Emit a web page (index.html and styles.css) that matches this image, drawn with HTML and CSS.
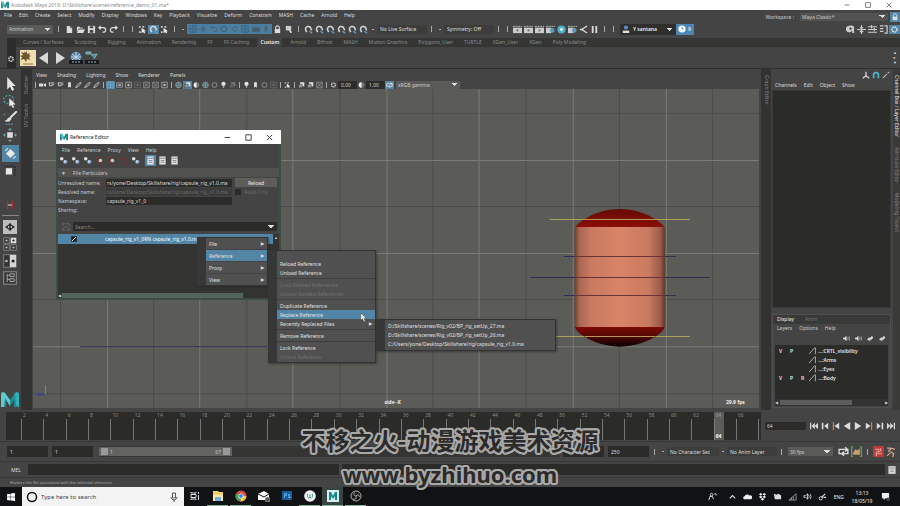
FILE: index.html
```html
<!DOCTYPE html>
<html lang="en">
<head>
<meta charset="utf-8">
<title>Autodesk Maya 2019: D:\Skillshare\scenes\reference_demo_01.ma*</title>
<link rel="stylesheet" href="styles.css">
</head>
<body>
<svg class="defs" aria-hidden="true">
  <defs>
    <linearGradient id="body" x1="0" x2="1" y1="0" y2="0"><stop offset="0" stop-color="#6f3f30"/><stop offset=".05" stop-color="#a86650"/><stop offset=".18" stop-color="#c97a60"/><stop offset=".5" stop-color="#d98468"/><stop offset=".82" stop-color="#c97a60"/><stop offset=".95" stop-color="#9a5c48"/><stop offset="1" stop-color="#5f3528"/></linearGradient>
    <linearGradient id="top" x1="0" x2="0" y1="0" y2="1"><stop offset="0" stop-color="#650a05"/><stop offset="1" stop-color="#8d0f08"/></linearGradient>
    <linearGradient id="low" x1="0" x2="0" y1="0" y2="1"><stop offset="0" stop-color="#7c0c06"/><stop offset=".4" stop-color="#5a0804"/><stop offset="1" stop-color="#0c0100"/></linearGradient>
  </defs>
  <symbol id="maya" viewBox="0 0 10 10"><path d="M0 1h3l2 4 2-4h3v8H7.600V5L6 8H4L2.400 5v4H0z" fill="#1d8a8c"/><path d="M0 1h3l2 4-1 3-4-7z" fill="#5cc7c4"/></symbol>
  <symbol id="new" viewBox="0 0 10 10"><path d="M2 1h4l2 2v6H2z" fill="#ddd"/><path d="M6 1v2h2" fill="none" stroke="#555"/></symbol>
  <symbol id="open" viewBox="0 0 10 10"><path d="M1 2h3l1 1h3v1H3L1 8zM3 5h7L8 9H1z" fill="#ddd"/></symbol>
  <symbol id="save" viewBox="0 0 10 10"><path d="M1 1h8v8H1z" fill="#ddd"/><path d="M3 1.500h4v2H3zM3 5.500h4v3H3z" fill="#444"/></symbol>
  <symbol id="undo" viewBox="0 0 10 10"><path d="M1 3h5a2.500 2.500 0 0 1 0 5H5M3 1 1 3l2 2" fill="none" stroke="#ddd" stroke-width="1.300"/></symbol>
  <symbol id="redo" viewBox="0 0 10 10"><path d="M9 3H4a2.500 2.500 0 0 0 0 5h1M7 1l2 2-2 2" fill="none" stroke="#ddd" stroke-width="1.300"/></symbol>
  <symbol id="pick" viewBox="0 0 10 10"><path d="M1 1h2v2H1zM1 7h2v2H1zM5 1h2v2H5z" fill="#ccc"/><path d="M4 3l5 4H7l1 2-1 .5L6 8 4 9z" fill="#eee"/></symbol>
  <symbol id="dots" viewBox="0 0 10 10"><path d="M0 6l4-3v6zM4 5l3-4 2 3-4 4z" fill="#ddd"/></symbol>
  <symbol id="arrow" viewBox="0 0 10 10"><path d="M3 0v9l2-2 1.500 3L8 9 6.500 6.500H9z" fill="#e4e4e4"/></symbol>
  <symbol id="lasso" viewBox="0 0 10 10"><ellipse cx="4" cy="4" rx="3.500" ry="3" fill="none" stroke="#4f9aa6" stroke-width=".9" stroke-dasharray="1.500 1"/><path d="M4.500 3v6l1.500-1.200L7 10l1-.5-.9-2H9z" fill="#eee"/></symbol>
  <symbol id="brush" viewBox="0 0 10 10"><path d="M10 0 5 5" stroke="#ddd" stroke-width="1.400"/><path d="M5.500 4.500C3 4.500 3 7 1 7c2 1.500 4.500.5 5-1.500z" fill="#ddd"/><path d="M2 9.500h6M1 2v2" stroke="#4f9aa6" stroke-dasharray="1 1"/></symbol>
  <symbol id="move" viewBox="0 0 10 10"><path d="M3 3h4v4H3z" fill="#ddd"/><path d="M5 0l1.500 1.600h-3zM5 10l1.500-1.600h-3zM0 5l1.600-1.500v3zM10 5 8.400 3.500v3z" fill="#6daab5"/></symbol>
  <symbol id="rotate" viewBox="0 0 10 10"><path d="M5 1.500 8.500 5 5 8.500 1.500 5z" fill="#e8e8e8"/><path d="M1 3 3 1M9 7 7 9" stroke="#b8dbe8" fill="none"/></symbol>
  <symbol id="scale" viewBox="0 0 10 10"><path d="M2 3h4.500v4.500H2z" fill="#e6e6e6"/><path d="M1 1.500h7.500v7" fill="none" stroke="#222" stroke-dasharray="1 1"/></symbol>
  <symbol id="snaps" viewBox="0 0 10 10"><path d="M2.500 1v8M7.500 1v8" stroke="#a33" stroke-width="1.300"/><path d="M3 5h4" stroke="#ddd"/></symbol>
  <symbol id="lay1" viewBox="0 0 10 10"><path d="M0 0h10v10H0z" fill="#bdbdbd"/><path d="M5 2l1.500 2L5 5 3.500 4zM5 8l1.500-2L5 5 3.500 6zM1.500 5l2-1.500v3zM8.500 5l-2-1.500v3z" fill="#222"/></symbol>
  <symbol id="lay4" viewBox="0 0 10 10"><path d="M.5.5h4v4h-4zM.5 5.500h4v4h-4zM5.500 5.500h4v4h-4z" fill="#333" stroke="#8a8a8a" stroke-width=".6"/><path d="M5.500.500h4v4h-4z" fill="#ddd"/><circle cx="2.500" cy="2.500" r=".8" fill="#bbb"/><circle cx="7.500" cy="2.500" r=".8" fill="#222"/><circle cx="2.500" cy="7.500" r=".8" fill="#bbb"/><circle cx="7.500" cy="7.500" r=".8" fill="#bbb"/></symbol>
  <symbol id="lay2" viewBox="0 0 10 10"><path d="M.5.5h4.500v9H.5z" fill="#333" stroke="#8a8a8a" stroke-width=".6"/><path d="M5 .5h4.500v9H5z" fill="#d6d6d6"/><circle cx="2.500" cy="5" r=".9" fill="#bbb"/><circle cx="7.200" cy="5" r="1.100" fill="#222"/></symbol>
  <symbol id="lay3" viewBox="0 0 10 10"><path d="M.5.5h9v9h-9z" fill="#333" stroke="#8a8a8a" stroke-width=".8"/><path d="M3 2v6M3 3h2M3 6h2" stroke="#aaa" stroke-width=".7"/><path d="M5 2h3v2H5zM5 5.500h3v2H5z" fill="none" stroke="#aaa" stroke-width=".7"/></symbol>
  <symbol id="magnet" viewBox="0 0 10 10"><path d="M3 8 1.800 5.500a3 3 0 1 1 5.800-1.800L8.500 6" fill="none" stroke="#d5d5d5" stroke-width="1.700"/><path d="M6 7l3 2" stroke="#6a9dc4" stroke-width="1.500"/></symbol>
  <symbol id="lock" viewBox="0 0 10 10"><path d="M2 4.500h6V9H2z" fill="#ddd"/><path d="M3 5V3a2 2 0 0 1 4 0v2" fill="none" stroke="#ddd" stroke-width="1.200"/></symbol>
  <symbol id="flag" viewBox="0 0 10 10"><path d="M2 1h6v5H2z" fill="#ccc"/><path d="M5 4l4 4-2 1z" fill="#fff"/></symbol>
  <symbol id="clap" viewBox="0 0 10 10"><path d="M0 3h10v6H0z" fill="#ccc"/><path d="M0 1.500h10" stroke="#ccc" stroke-dasharray="2 1"/><path d="M4 5h2v2H4z" fill="#666"/></symbol>
  <symbol id="clapb" viewBox="0 0 10 10"><path d="M0 3h6v6H0z" fill="#ccc"/><path d="M0 1.500h10" stroke="#ccc" stroke-dasharray="2 1"/><circle cx="7" cy="6" r="2.600" fill="#5b9ab8"/></symbol>
  <symbol id="ball" viewBox="0 0 10 10"><circle cx="5" cy="5" r="4.500" fill="#52b1c4"/><circle cx="5" cy="5" r="1.600" fill="#e8f7fa"/></symbol>
  <symbol id="cut" viewBox="0 0 10 10"><path d="M9 1 3 5l6 4M1 5h4" fill="none" stroke="#ddd" stroke-width="1.400"/></symbol>
  <symbol id="pause" viewBox="0 0 10 10"><path d="M2 1h2v8H2zM6 1h2v8H6z" fill="#ddd"/></symbol>
  <symbol id="cam" viewBox="0 0 10 10"><path d="M0 3h6v4H0zM7 4l3-2v6L7 6z" fill="#ddd"/></symbol>
  <symbol id="cams" viewBox="0 0 10 10"><path d="M1 2h8M2 2v4h4V3M7 5l2-1" fill="none" stroke="#ccc" stroke-width="1.300"/></symbol>
  <symbol id="mark" viewBox="0 0 10 10"><path d="M3 1h4v8L5 7.500 3 9z" fill="#ddd"/></symbol>
  <symbol id="pen" viewBox="0 0 10 10"><path d="M1 9l2-4 5-4 1 1-4 5z" fill="none" stroke="#ccc" stroke-width="1.200"/></symbol>
  <symbol id="grid" viewBox="0 0 10 10"><path d="M1 1h8v8H1zM1 5h8M5 1v8" fill="none" stroke="#7fb0cf" stroke-width="1"/></symbol>
  <symbol id="film" viewBox="0 0 10 10"><path d="M.5 2h9v6h-9z" fill="none" stroke="#bbb"/><path d="M2.500 4h5v2h-5z" fill="#bbb"/></symbol>
  <symbol id="gate" viewBox="0 0 10 10"><path d="M1 1h8v8H1z" fill="none" stroke="#bbb"/><circle cx="5" cy="5" r="1.700" fill="#bbb"/></symbol>
  <symbol id="gate2" viewBox="0 0 10 10"><path d="M1 1h8v8H1zM2 2l6 6M8 2 2 8" fill="none" stroke="#aaa" stroke-width=".9"/></symbol>
  <symbol id="ring" viewBox="0 0 10 10"><circle cx="5" cy="5" r="3.500" fill="none" stroke="#999" stroke-width="1.200"/></symbol>
  <symbol id="half" viewBox="0 0 10 10"><circle cx="5" cy="5" r="4" fill="#777"/><path d="M5 1a4 4 0 0 0 0 8z" fill="#eee"/></symbol>
  <symbol id="globe" viewBox="0 0 10 10"><circle cx="5" cy="5" r="4" fill="#4d6a72" stroke="#9aabb0"/><path d="M1 5h8M5 1v8" stroke="#9aabb0" stroke-width=".7"/></symbol>
  <symbol id="bulb" viewBox="0 0 10 10"><circle cx="5" cy="3.500" r="3" fill="#e4e4e4"/><path d="M4 6h2v3H4z" fill="#aaa"/></symbol>
  <symbol id="cube" viewBox="0 0 10 10"><path d="M3 1h6v6H3z" fill="#ddd"/><path d="M1 4h5v5H1z" fill="#999" stroke="#333" stroke-width=".7"/></symbol>
  <symbol id="tool" viewBox="0 0 10 10"><path d="M0 3c2-3 7-3 9-1v7H7V6L5 8H2L0 6z" fill="#ccc"/><circle cx="5" cy="4" r="1.300" fill="#444"/></symbol>
  <symbol id="figure" viewBox="0 0 10 10"><path d="M5 0v10M0 5h10M3 3h4M3 8l2-2 2 2" stroke="#ccc" stroke-width="1.200" fill="none"/></symbol>
  <symbol id="lines" viewBox="0 0 10 10"><path d="M0 2h10M0 5h10M0 8h10M4 0v4M7 3v4" stroke="#ccc" stroke-width="1.200"/></symbol>
  <symbol id="panel" viewBox="0 0 10 10"><path d="M1 1h4M1 4h4M1 7h4M6 1h3v8H6" stroke="#ccc" stroke-width="1.400" fill="none"/></symbol>
  <symbol id="gear" viewBox="0 0 10 10"><circle cx="5" cy="5" r="2.800" fill="none" stroke="#ddd" stroke-width="1.600" stroke-dasharray="2 .6"/></symbol>
  <symbol id="axis" viewBox="0 0 10 10"><path d="M5 1v5L1 9M5 6l4 3" stroke="#ddd" stroke-width="1.500" fill="none"/></symbol>
  <symbol id="arch" viewBox="0 0 10 10"><path d="M2 9V5a3 3 0 0 1 6 0v4" stroke="#46b3c4" stroke-width="2.200" fill="none"/></symbol>
  <symbol id="slash" viewBox="0 0 10 10"><path d="M1 9 6 4M7 3l2-2" stroke="#bbb" stroke-width="1.300"/></symbol>
  <symbol id="curve" viewBox="0 0 10 10"><path d="M0 9 7 1h1v8" fill="none" stroke="#c8c8bc" stroke-width="1"/></symbol>
  <symbol id="horn" viewBox="0 0 10 10"><path d="M0 4h2l3-3v8L2 6H0z" fill="#ddd"/><path d="M7 3v4M9 2v6" stroke="#ddd" stroke-width=".8"/></symbol>
  <symbol id="sheet" viewBox="0 0 10 10"><path d="M1.500.5h7v9h-7z" fill="#e2e2e2"/><path d="M1.500 2.500h7M3 5h4M3 7h4" stroke="#777" stroke-width=".9"/></symbol>
  <symbol id="refdot" viewBox="0 0 10 10"><circle cx="3" cy="3" r="2" fill="#ddd"/><circle cx="7" cy="6.500" r="2.400" fill="#7f9fc0"/><circle cx="6.500" cy="6" r="1" fill="#eef"/></symbol>
  <symbol id="refred" viewBox="0 0 10 10"><path d="M1 3 3 1M2 8l6-6M8 8l1 1" stroke="#a02828" stroke-width="1.200"/><circle cx="6" cy="5" r="2" fill="#ccc"/></symbol>
  <symbol id="refoff" viewBox="0 0 10 10"><path d="M2 1l3 4M6 6l3 3" stroke="#8c2020" stroke-width="1.200"/><circle cx="6" cy="4" r="1.500" fill="#6a3a3a"/></symbol>
  <symbol id="min" viewBox="0 0 10 10"><path d="M2 5h6" stroke="currentColor"/></symbol>
  <symbol id="max" viewBox="0 0 10 10"><path d="M2 2h6v6H2z" stroke="currentColor" fill="none"/></symbol>
  <symbol id="close" viewBox="0 0 10 10"><path d="M2 2l6 6M8 2 2 8" stroke="currentColor"/></symbol>
  <symbol id="loop" viewBox="0 0 10 10"><path d="M3 7H1V3h7M6.500 1l2 2-2 2M7 3h2v4H4M5.500 5l-2 2 2 2" fill="none" stroke="#ddd" stroke-width="1.200"/></symbol>
  <symbol id="key" viewBox="0 0 10 10"><path d="M2 0H.6v10H2M8 0h1.400v10H8" fill="none" stroke="#69a052" stroke-width="1.200"/><path d="M2 6l2-3 2 1 2-2v6H2z" fill="#c9a070"/></symbol>
  <symbol id="auto" viewBox="0 0 10 10"><path d="M2 3h4M7 2v3M8 7H4M3 5v4" stroke="#f0a8a0" stroke-width="1"/><circle cx="5" cy="5" r="1" fill="#f0c0b8"/></symbol>
  <symbol id="run" viewBox="0 0 10 10"><path d="M1 2h4M2 5l3-3 3 1M4 5l3 2-1 3M4 6 1 9" stroke="#d8a090" stroke-width="1.200" fill="none"/></symbol>
</svg>

<header class="titlebar">
  <svg class="i8"><use href="#maya"/></svg>
  <span class="title">Autodesk Maya 2019: D:\Skillshare\scenes\reference_demo_01.ma*</span>
  <div class="winbtns"><button aria-label="Minimize"><svg class="i8"><use href="#min"/></svg></button><button aria-label="Restore"><svg class="i8"><use href="#max"/></svg></button><button aria-label="Close"><svg class="i8"><use href="#close"/></svg></button></div>
</header>

<div class="top">
  <nav class="menubar"><a href="#">File</a><a href="#">Edit</a><a href="#">Create</a><a href="#">Select</a><a href="#">Modify</a><a href="#">Display</a><a href="#">Windows</a><a href="#">Key</a><a href="#">Playback</a><a href="#">Visualize</a><a href="#">Deform</a><a href="#">Constrain</a><a href="#">MASH</a><a href="#">Cache</a><a href="#">Arnold</a><a href="#">Help</a></nav>
  <div class="workspace"><label for="ws">Workspace :</label><select id="ws" class="combo"><option>Maya Classic*</option></select><button class="hl lockbtn" aria-label="Lock workspace"><svg class="i8"><use href="#lock"/></svg></button></div>
</div>

<div class="status">
  <select class="combo mode" aria-label="Menu set"><option>Animation</option></select>
  <i class="sep wide"></i>
  <div class="set11"><svg><use href="#new"/></svg><svg><use href="#open"/></svg><svg><use href="#save"/></svg><svg><use href="#undo"/></svg><svg><use href="#redo"/></svg></div>
  <i class="sep"></i><i class="sep"></i>
  <div class="set11"><svg><use href="#pick"/></svg><svg class="hl"><use href="#magnet"/></svg><svg><use href="#pick"/></svg></div>
  <i class="sep"></i><i class="pt"></i>
  <div class="mask"><svg><use href="#grid"/></svg><svg><use href="#figure"/></svg><svg><use href="#undo"/></svg><svg><use href="#ring"/></svg><svg><use href="#gear"/></svg><svg><use href="#grid"/></svg><svg><use href="#clap"/></svg><svg><use href="#mark"/></svg></div>
  <div class="set11"><svg><use href="#lock"/></svg><svg><use href="#flag"/></svg></div>
  <i class="sep"></i>
  <div class="set11"><svg><use href="#magnet"/></svg><svg><use href="#magnet"/></svg><svg><use href="#magnet"/></svg><svg><use href="#magnet"/></svg><svg><use href="#magnet"/></svg><svg><use href="#magnet"/></svg></div>
  <i class="pt"></i><button class="flat">No Live Surface</button><i class="sep"></i><i class="pt"></i><button class="flat">Symmetry: Off</button><i class="sep"></i><i class="sep"></i>
  <div class="set11"><svg><use href="#clap"/></svg><svg><use href="#clap"/></svg><svg><use href="#clap"/></svg><svg><use href="#clapb"/></svg><svg><use href="#ball"/></svg><svg><use href="#clapb"/></svg><svg><use href="#cut"/></svg><svg><use href="#pause"/></svg></div>
  <i class="sep"></i><i class="sep"></i>
  <div class="user"><svg class="i8" viewBox="0 0 10 10"><circle cx="5" cy="3" r="2.500" fill="#5a8fd8"/><path d="M1 10V7h8v3z" fill="#ddd"/></svg><select class="combo" aria-label="Account"><option>Y santana</option></select><button class="days"><svg class="i8" viewBox="0 0 10 10"><circle cx="5" cy="5" r="4.500" fill="#fff"/><path d="M5 2v3h2" stroke="#4b86b4" fill="none"/></svg>9</button></div>
  <div class="set11 right"><svg><use href="#tool"/></svg><svg><use href="#figure"/></svg><svg><use href="#lines"/></svg><svg><use href="#panel"/></svg><svg class="hl"><use href="#gear"/></svg></div>
</div>

<nav class="tabs"><a href="#">Curves / Surfaces</a><a href="#">Sculpting</a><a href="#">Rigging</a><a href="#">Animation</a><a href="#">Rendering</a><a href="#">FX</a><a href="#">FX Caching</a><a href="#" class="on">Custom</a><a href="#">Arnold</a><a href="#">Bifrost</a><a href="#">MASH</a><a href="#">Motion Graphics</a><a href="#">Polygons_User</a><a href="#">TURTLE</a><a href="#">XGen_User</a><a href="#">XGen</a><a href="#">Poly Modeling</a></nav>
<div class="shelf">
  <div class="shelfside"><svg class="i8"><use href="#gear"/></svg></div>
  <svg class="i16" viewBox="0 0 16 16"><path d="M0 0h16v16H0z" fill="#f0dfae"/><path d="M4 1l1 2 2-2v3l3-1-1 2 2 1-2 1 1 3-3-1-1 3-2-3-3 1 1-3-2-1 3-1-2-3 3 1z" fill="#6d5634"/><path d="M3 14h10" stroke="#8d794c"/></svg>
  <svg class="i16" viewBox="0 0 16 16"><path d="M12 2v12L3 8z" fill="#d9d9d9"/></svg>
  <svg class="i16" viewBox="0 0 16 16"><path d="M4 2v12l9-6z" fill="#d9d9d9"/></svg>
  <svg class="i16" viewBox="0 0 16 16"><circle cx="8" cy="7" r="5.500" fill="#547f9e"/><path d="M8 2v9M3 7h10M4 4l8 6M12 4l-8 6" stroke="#c6dceb"/><path d="M1 10h14v4H1z" fill="#15191c"/><path d="M4 12h8" stroke="#9ab4c4" stroke-dasharray="2 1"/></svg>
  <svg class="i16" viewBox="0 0 16 16"><path d="M2 2h5v2H2zM7 5l6-1-3 5" fill="#4e8695" stroke="#9cc" stroke-width=".8"/><path d="M1 10h14v4H1z" fill="#15191c"/><path d="M4 12h8" stroke="#9ab4c4" stroke-dasharray="2 1"/></svg>
  <div class="updown"><span>▲</span><span>●</span><span>▼</span></div>
</div>

<main class="main">
  <aside class="toolbox">
    <svg><use href="#arrow"/></svg><svg><use href="#lasso"/></svg><svg><use href="#brush"/></svg><svg><use href="#move"/></svg><svg class="hl"><use href="#rotate"/></svg><svg><use href="#scale"/></svg>
    <svg class="gap"><use href="#snaps"/></svg><hr>
    <svg><use href="#lay1"/></svg><svg><use href="#lay4"/></svg><svg><use href="#lay2"/></svg><svg><use href="#lay3"/></svg>
    <svg class="logo" viewBox="0 0 18 15"><path d="M0 15V2C0 0 3 0 4 1l5 7 5-7c1-1 4-1 4 1v13h-5V8l-4 6L5 8v7z" fill="#1f8f95"/><path d="M0 15V2C0 0 3 0 4 1l5 7v6L4 6 3 15z" fill="#5ecbd0"/><path d="M14 1c1-1 4-1 4 1v13l-3-2z" fill="#2fb0b6"/></svg>
  </aside>
  <div class="vtabs"><span>Outliner</span><span>UV Toolkit</span></div>

  <section class="view">
    <nav class="viewmenu"><a href="#">View</a><a href="#">Shading</a><a href="#">Lighting</a><a href="#">Show</a><a href="#">Renderer</a><a href="#">Panels</a></nav>
    <div class="viewtools">
      <i class="sep"></i><svg><use href="#cam"/></svg><svg><use href="#cams"/></svg><svg><use href="#cams"/></svg><svg><use href="#mark"/></svg><svg><use href="#pen"/></svg><svg><use href="#pen"/></svg><svg><use href="#pen"/></svg>
      <i class="sep"></i><svg class="hl"><use href="#grid"/></svg><svg><use href="#film"/></svg><svg><use href="#gate"/></svg><svg class="dim"><use href="#gate"/></svg><svg><use href="#gate2"/></svg><svg><use href="#gate2"/></svg><svg><use href="#gate"/></svg>
      <i class="sep"></i><svg><use href="#globe"/></svg><svg class="hl"><use href="#cube"/></svg><svg><use href="#half"/></svg><svg><use href="#globe"/></svg><svg><use href="#ring"/></svg><svg><use href="#bulb"/></svg><svg class="dim"><use href="#cube"/></svg>
      <i class="sep"></i><svg><use href="#bulb"/></svg><svg><use href="#mark"/></svg><svg><use href="#ring"/></svg><svg class="dim"><use href="#gate"/></svg>
      <i class="sep"></i><svg><use href="#pick"/></svg><i class="sep"></i><svg><use href="#cube"/></svg><svg><use href="#cube"/></svg><svg><use href="#gate2"/></svg>
      <i class="sep"></i><svg><use href="#gear"/></svg><input value="0.00" aria-label="Exposure"><svg><use href="#half"/></svg><input value="1.00" aria-label="Gamma"><svg class="hl"><use href="#loop"/></svg><select class="combo" aria-label="View transform"><option>sRGB gamma</option></select>
    </div>
    <svg class="scene" viewBox="33 89 725 319" preserveAspectRatio="xMidYMid slice">
      <path d="M33 89h725v319H33z" fill="#5b5c58"/>
      <path d="M60.500 89v319M153.500 89v319M246.500 89v319M339.500 89v319M432.500 89v319M525.500 89v319M618.500 89v319M711.500 89v319M33 113.500h725M33 206.500h725M33 299.500h725M33 393.500h725" stroke="#4b4c49"/>
      <path d="M107.500 89v319M199.500 89v319M292.500 89v319M386.500 89v319M478.500 89v319M572.500 89v319M665.500 89v319M33 160.500h725M33 253.500h725M33 346.500h725" stroke="#7b7c78"/>
      <path d="M80 346.500h187" stroke="#2c2c4c"/>
      <path d="M549 336.500h140M549 219.500h140" stroke="#a8a45c"/>
      <path d="M574 228c2-5 20-19 45-19s43 14 45 19z" fill="url(#top)"/>
      <path d="M574 227h90v100h-90z" fill="url(#body)"/>
      <path d="M574 327h90c-2 7-22 19.500-45 19.500S576 334 574 327z" fill="url(#low)"/>
      <path d="M580 219.500h79M584 336.500h70" stroke="#b89848"/>
      <path d="M563 256.500h112M530 277.500h179M563 295.500h112" stroke="#2d2d52"/>
      <path d="M574 256.500h90M574 277.500h90M574 295.500h90" stroke="#6b3434"/>
      <path d="M45.500 394v-9" stroke="#59a83c"/><path d="M37 394.500h8M38.500 392v4" stroke="#3a3a9a"/>
      <text x="384" y="404" class="hud">side -X</text><text x="725" y="404" class="hud fps">29.9 fps</text>
    </svg>
  </section>

  <div class="vtabs graph"><span>Graph Editor</span></div>
  <aside class="channel">
    <div class="chicons"><svg class="i8"><use href="#axis"/></svg><svg class="i8"><use href="#arch"/></svg><svg class="i8"><use href="#slash"/></svg></div>
    <nav class="chmenu"><a href="#">Channels</a><a href="#">Edit</a><a href="#">Object</a><a href="#">Show</a></nav>
    <div class="chbox"></div>
    <div class="layers">
      <nav class="ltabs"><a href="#" class="on">Display</a><a href="#">Anim</a></nav>
      <nav class="lmenu"><a href="#">Layers</a><a href="#">Options</a><a href="#">Help</a></nav>
      <div class="licons"><svg><use href="#horn"/></svg><svg><use href="#horn"/></svg><svg><use href="#dots"/></svg><svg><use href="#dots"/></svg></div>
      <table class="ltable">
        <tr><td>V</td><td>P</td><td></td><td class="nm"><svg><use href="#curve"/></svg>...:CRTL_visibility</td></tr>
        <tr><td></td><td></td><td></td><td class="nm"><svg><use href="#curve"/></svg>...:Arms</td></tr>
        <tr><td></td><td></td><td></td><td class="nm"><svg><use href="#curve"/></svg>...:Eyes</td></tr>
        <tr><td>V</td><td>P</td><td>R</td><td class="nm"><svg><use href="#curve"/></svg>...:Body</td></tr>
      </table>
      <div class="hbar"><span>◀</span><i></i><span>▶</span></div>
    </div>
  </aside>
  <div class="vtabs far"><span class="on">Channel Box / Layer Editor</span><span>Attribute Editor</span><span>Modeling Toolkit</span></div>
</main>

<div class="time">
  <div class="track"><span>2</span><span>4</span><span>6</span><span>8</span><span>10</span><span>12</span><span>14</span><span>16</span><span>18</span><span>20</span><span>22</span><span>24</span><span>26</span><span>28</span><span>30</span><span>32</span><span>34</span><span>36</span><span>38</span><span>40</span><span>42</span><span>44</span><span>46</span><span>48</span><span>50</span><span>52</span><span>54</span><span>56</span><span>58</span><span>60</span><span>62</span><span class="now">64<b>64</b></span><span>66</span><span></span></div>
  <input class="cur" value="64" aria-label="Current frame">
  <div class="play">
    <button aria-label="Go to start"><svg viewBox="0 0 10 10"><path d="M0 1h1.500v8H0zM6 1v8L2 5zM10 1v8L6 5z"/></svg></button>
    <button aria-label="Step back"><svg viewBox="0 0 10 10"><path d="M1 1h2v8H1zM9 1v8L4 5z"/></svg></button>
    <button aria-label="Previous key"><svg viewBox="0 0 10 10"><path d="M1 0h1.500v10H1z" fill="#d08040"/><path d="M9 1v8L3 5z"/></svg></button>
    <button aria-label="Play backwards"><svg viewBox="0 0 10 10"><path d="M9 0v10L1 5z"/></svg></button>
    <button aria-label="Play forwards"><svg viewBox="0 0 10 10"><path d="M1 0v10l8-5z"/></svg></button>
    <button aria-label="Next key"><svg viewBox="0 0 10 10"><path d="M1 1v8l6-4z"/><path d="M7.500 0H9v10H7.500z" fill="#d08040"/></svg></button>
    <button aria-label="Step forward"><svg viewBox="0 0 10 10"><path d="M1 1v8l5-4zM7 1h2v8H7z"/></svg></button>
    <button aria-label="Go to end"><svg viewBox="0 0 10 10"><path d="M0 1v8l4-4zM4 1v8l4-4zM8.500 1H10v8H8.500z"/></svg></button>
  </div>
</div>

<div class="range">
  <input class="f" value="1" aria-label="Animation start"><input class="f" value="1" aria-label="Playback start">
  <div class="slider"><div class="thumb"><i></i><span>1</span><span class="end">67</span><i></i></div></div>
  <input class="f" value="" aria-label="Playback end"><input class="f" value="250" aria-label="Animation end">
  <div class="rright"><i class="sep"></i><i class="pt"></i><button class="flat cs">No Character Set</button><i class="pt"></i><button class="flat">No Anim Layer</button><i class="sep"></i><select class="combo fpsel" aria-label="Frame rate"><option>30 fps</option></select><svg><use href="#loop"/></svg><svg><use href="#key"/></svg><i class="sep"></i><svg class="red"><use href="#auto"/></svg><svg><use href="#run"/></svg></div>
</div>
<div class="cmd"><label for="mel">MEL</label><input id="mel"><input aria-label="Result" class="out"><button aria-label="Script editor"><svg class="i8"><use href="#sheet"/></svg></button></div>
<div class="help">Replace the file associated with the selected reference.</div>

<footer class="taskbar">
  <button class="start" aria-label="Start"><svg class="i8" viewBox="0 0 10 10"><path d="M0 1.500l4.500-.7v4H0zM5 .7 10 0v4.800H5zM0 5.300h4.500v4L0 8.600zM5 5.300h5V10l-5-.7z" fill="#fff"/></svg></button>
  <div class="search"><svg viewBox="0 0 12 12"><circle cx="6" cy="6" r="4.500" fill="none" stroke="#111" stroke-width="1.500"/></svg><input aria-label="Search" placeholder="Type here to search"><svg viewBox="0 0 12 12"><path d="M4.500 2h3v5h-3zM3 6c0 4 6 4 6 0M6 9v2" fill="none" stroke="#555"/></svg></div>
  <div class="apps">
    <button aria-label="Task view"><svg viewBox="0 0 12 12"><path d="M2 2v1h5V2M2 10V9h5v1M2 4.500h5v3H2zM9.500 2v2M9.500 5v5" fill="none" stroke="#ddd"/></svg></button>
    <button class="open" aria-label="File Explorer"><svg viewBox="0 0 12 12"><path d="M1 1h5l1 1h4v9H1z" fill="#f0cf6a"/><path d="M1 5h10v6H1z" fill="#fbe9a8"/><path d="M3 7h6v4H3z" fill="#6fb0d8"/></svg></button>
    <button class="open" aria-label="Chrome"><svg viewBox="0 0 12 12"><circle cx="6" cy="6" r="5.500" fill="#d94a3c"/><path d="M6 6 1.200 3.300A5.500 5.500 0 0 0 5.500 11.500z" fill="#42a456"/><path d="M6 6h5.500a5.500 5.500 0 0 1-6 5.500z" fill="#f2c53a"/><circle cx="6" cy="6" r="2.600" fill="#fff"/><circle cx="6" cy="6" r="2" fill="#4484e0"/></svg></button>
    <button aria-label="Mail"><svg viewBox="0 0 12 12"><path d="M0 4l6-3 5 3v6H0z" fill="#fff"/><path d="M0 4l6 3 5-3" stroke="#111" fill="none"/><circle cx="9.500" cy="9.500" r="2.500" fill="#555" stroke="#ccc" stroke-width=".5"/></svg></button>
    <button aria-label="Photoshop"><svg viewBox="0 0 12 12"><path d="M1 1h10v9H1z" fill="#1a5a9a"/><path d="M3.500 8V3.500h2v2h-2M9 4.500H7.500v1.500H9v1.500H7" stroke="#5fb4f0" fill="none" stroke-width=".9"/></svg></button>
    <button class="open" aria-label="Wacom"><svg viewBox="0 0 12 12"><circle cx="6" cy="6" r="5.800" fill="#f0f4f4"/><path d="M3.500 4v3q1.200 2 2.500 0V4M6 7q1.200 2 2.500 0V4" stroke="#56a0a0" fill="none"/></svg></button>
    <button class="open act" aria-label="Maya"><svg viewBox="0 0 12 12"><path d="M0 0h12v12H0z" fill="#d9efee"/><path d="M2 10V2h2l2 4 2-4h2v8H8V6L6 9 4 6v4z" fill="#13898b"/></svg></button>
    <button class="open" aria-label="OBS"><svg viewBox="0 0 12 12"><circle cx="6" cy="6" r="5" fill="#181818" stroke="#bbb" stroke-width=".9"/><path d="M6 6c-2 0-3-2-1.500-3.500M6 6c1-2 3.500-1 3.500 1M6 6c1 2-1 4-3 3" stroke="#bbb" fill="none"/></svg></button>
  </div>
  <div class="tray">
    <svg viewBox="0 0 10 10"><circle cx="4" cy="3" r="1.500" fill="none" stroke="#ddd"/><path d="M1 9l1-4h3l1 3M7 2h2v2" fill="none" stroke="#ddd"/></svg>
    <svg viewBox="0 0 10 10"><path d="M2 7l3-3 3 3" fill="none" stroke="#ddd" stroke-width="1.200"/></svg>
    <svg viewBox="0 0 10 10"><path d="M1 8a2 2 0 0 1 1-3.500 3 3 0 0 1 5-.5 2 2 0 0 1 2 4z" fill="#eee"/></svg>
    <svg viewBox="0 0 10 10"><path d="M3 1l2 1.500L3 4 1 2.500zM7 1l2 1.500L7 4 5 2.500zM3 4l2 1.500L3 7 1 5.500zM7 4l2 1.500L7 7 5 5.500zM5 6.500 7 8 5 9.500 3 8z" fill="#eee"/></svg>
    <svg viewBox="0 0 10 10"><path d="M1 2l3 1 2-1 3 2v4H2z" fill="#ddd"/></svg>
    <svg viewBox="0 0 10 10"><path d="M1 9l8-7v7zM4 9V6M6 9V5" fill="none" stroke="#999"/></svg>
    <svg viewBox="0 0 10 10"><path d="M1 4h2l2-2v6L3 6H1zM6 3q2 2 0 4M8 2q2 3 0 6" fill="none" stroke="#ddd" stroke-width=".9"/></svg>
    <svg viewBox="0 0 10 10"><circle cx="3" cy="7" r="1.800" fill="none" stroke="#ddd"/><path d="M4 6l4-4M6 6h3" stroke="#ddd" stroke-width="1.300"/></svg>
    <span class="lang">ENG</span>
    <time>13:13<br>18/05/19</time>
    <svg viewBox="0 0 10 10"><path d="M1 1h8v6H5L3 9V7H1z" fill="#eee"/><circle cx="8" cy="8" r="2" fill="#444"/></svg>
  </div>
</footer>

<section class="dialog">
  <header><svg class="i8"><use href="#maya"/></svg><h2>Reference Editor</h2><button aria-label="Minimize"><svg><use href="#min"/></svg></button><button aria-label="Maximize"><svg><use href="#max"/></svg></button><button aria-label="Close"><svg><use href="#close"/></svg></button></header>
  <nav class="dmenu"><a href="#">File</a><a href="#">Reference</a><a href="#">Proxy</a><a href="#">View</a><a href="#">Help</a></nav>
  <div class="dtools"><svg><use href="#refdot"/></svg><svg><use href="#refdot"/></svg><svg><use href="#refdot"/></svg><svg><use href="#refred"/></svg><svg><use href="#refred"/></svg><svg><use href="#refoff"/></svg><svg><use href="#refdot"/></svg><svg class="hl"><use href="#sheet"/></svg><svg><use href="#sheet"/></svg><svg><use href="#sheet"/></svg></div>
  <button class="fold"><span>▼</span>File Particulars</button>
  <div class="form">
    <label for="un">Unresolved name:</label><input id="un" value="rs/yone/Desktop/Skillshare/rig/capsule_rig_v1.0.ma"><button>Reload</button>
    <label for="rn">Resolved name:</label><input id="rn" disabled value="rs/yone/Desktop/Skillshare/rig/capsule_rig_v1.0.ma"><label class="ro"><input type="checkbox" disabled>Read Only</label>
    <label for="ns">Namespace:</label><input id="ns" value="capsule_rig_v1_0"><span></span>
    <span>Sharing:</span>
  </div>
  <div class="find"><svg viewBox="0 0 10 10"><path d="M4 1H1v3M6 1h3v3M4 9H1V6M6 9h3V6M3 5h4" fill="none" stroke="#777"/></svg><select class="combo" aria-label="Search"><option>Search...</option></select></div>
  <div class="list"><label class="row"><input type="checkbox" checked><span>capsule_rig_v1_0RN capsule_rig_v1.0.ma</span></label><div class="lscroll">▲</div><div class="lbar"><span>◀</span><i></i></div></div>
</section>

<menu class="menu m1"><li>File<b>▶</b></li><li class="sel">Reference<b>▶</b></li><li>Proxy<b>▶</b></li><li>View<b>▶</b></li></menu>
<menu class="menu m2"><li>Reload Reference</li><li>Unload Reference</li><li class="line"></li><li class="off">Load Related References</li><li class="off">Unload Related References</li><li class="line"></li><li>Duplicate Reference</li><li class="sel">Replace Reference</li><li>Recently Replaced Files<b>▶</b></li><li class="line"></li><li>Remove Reference</li><li class="line"></li><li>Lock Reference</li><li class="off">Unlock Reference</li></menu>
<menu class="menu m3"><li>D:/Skillshare/scenes/Rig_v02/BP_rig_setUp_27.ma</li><li>D:/Skillshare/scenes/Rig_v02/BP_rig_setUp_26.ma</li><li>C:/Users/yone/Desktop/Skillshare/rig/capsule_rig_v1.0.ma</li></menu>
<svg class="pointer" viewBox="0 0 10 10"><path d="M2 0v8l2-1.500L5.500 10 7 9 5.500 6H8z" fill="#fff" stroke="#333" stroke-width=".5"/></svg>

<div class="mark"><p class="cn" lang="zh">不移之火-动漫游戏美术资源</p><p class="url">www.byzhihuo.com</p></div>
</body>
</html>
```
FILE: styles.css
```css
* { box-sizing: border-box; }
body {
  margin: 0; min-height: 100vh; display: flex; flex-direction: column; position: relative; overflow: hidden;
  background: #444; color: #ccc; font: 5px/8px "Noto Sans", "Open Sans", sans-serif;
}
a { color: inherit; text-decoration: none; }
button, input, select { font: inherit; color: inherit; background: none; border: 0; padding: 0; margin: 0; border-radius: 0; min-width: 0; }
svg { display: block; flex: none; }
.defs { position: absolute; width: 0; height: 0; }
.i8 { width: 8px; height: 8px; }
.i16 { width: 16px; height: 16px; }
.hl { background: #5285a6; }
.combo { appearance: none; background: #5a5a58 conic-gradient(from -45deg at 50% 100%, #ddd 90deg, transparent 0) no-repeat right 3px center / 6px 3px; padding: 0 10px 0 2px; }
.sep { flex: none; width: 9px; height: 7px; background: linear-gradient(#aaa, #aaa) no-repeat center / 1px 6px; }
.sep.wide { width: 11px; }
.pt { flex: none; width: 8px; height: 2px; background: linear-gradient(#aaa, #aaa) no-repeat center / 2px 1px; }

.titlebar { display: flex; align-items: center; height: 10px; padding-left: 1px; gap: 2px; background: #fff; color: #8a8a8a; }
.title { flex: 1; }
.winbtns { display: flex; gap: 13px; padding-right: 7px; color: #666; }

.top { display: flex; align-items: center; height: 10px; }
.menubar { display: flex; gap: 7px; padding-left: 4px; flex: 1; color: #ddd; }
.workspace { display: flex; align-items: center; height: 10px; margin-top: 3px; gap: 6px; }
.workspace .combo { width: 88px; height: 8px; background-color: #525250; }
.lockbtn { width: 10px; height: 10px; margin-left: -4px; padding: 1px; }

.status { display: flex; align-items: center; height: 18px; padding-left: 7px; }
.mode { width: 46px; height: 9px; }
.set11 { display: flex; }
.set11 svg { width: 11px; height: 9px; padding: 0 1px; }
.set11.right { margin-left: auto; }
.mask { display: flex; justify-content: space-between; align-items: center; width: 85px; height: 10px; padding: 0 2px; background: #4a7fa3; }
.mask svg { width: 8px; height: 8px; filter: brightness(.35); opacity: .5; }
.flat { height: 9px; width: 50px; padding: 0 3px; background: #3d3d3b; text-align: left; white-space: nowrap; color: #ddd; }
.user { display: flex; align-items: center; height: 11px; margin-left: 2px; background: #2f2f2e; padding-left: 2px; gap: 1px; color: #eee; font-weight: 600; }
.user .combo { background-color: #2f2f2e; width: 44px; height: 9px; }
.days { display: flex; align-items: center; gap: 2px; height: 11px; width: 18px; padding: 0 2px; background: #4b86b4; }

.tabs { display: flex; gap: 11px; height: 9px; padding-left: 23px; background: linear-gradient(90deg, #444 7px, #2c2c2b 7px, #2c2c2b 16px, #353534 16px); color: #8c8c8a; white-space: nowrap; }
.tabs .on { color: #eee; background: #444; padding: 0 3px; margin: 0 -3px; font-weight: 600; }
.shelf { display: flex; align-items: center; height: 22px; border-bottom: 1px solid #303030; }
.shelfside { width: 20px; height: 21px; padding: 8px 0 0 7px; background: linear-gradient(90deg, #444 7px, #2c2c2b 7px, #2c2c2b 16px, #444 16px); }
.updown { margin-left: auto; padding-right: 3px; display: grid; font-size: 4px; line-height: 5px; color: #ddd; }

.main { flex: 1; display: flex; min-height: 0; }
.toolbox { width: 21px; display: flex; flex-direction: column; align-items: center; padding: 8px 1px 3px 0; }
.toolbox svg { width: 14px; height: 14px; margin-bottom: 3px; }
.toolbox svg.hl { width: 17px; height: 17px; padding: 2px; margin: 0 0 2px; }
.toolbox svg.gap { height: 10px; margin: 19px 0 5px; }
.toolbox hr { width: 17px; margin: 0 0 4px; border: 0; border-top: 1px solid #888; }
.toolbox svg.logo { width: 18px; height: 15px; margin: auto 0 0; }
.vtabs { width: 11px; margin-right: 1px; display: flex; flex-direction: column; gap: 10px; align-items: center; padding-top: 6px; background: #323231; color: #858583; white-space: nowrap; }
.vtabs span { writing-mode: vertical-rl; line-height: 9px; }
.toolbox + .vtabs span { transform: rotate(180deg); }
.graph { width: 10px; margin: 0 0 0 2px; }
.far { width: 7px; margin: 0; background: #3a3a39; }
.far .on { color: #eee; }

.view { flex: 1; min-width: 0; display: flex; flex-direction: column; padding-bottom: 2px; }
.viewmenu { display: flex; gap: 10px; height: 11px; padding: 2px 0 0 3px; color: #ddd; }
.viewtools { display: flex; align-items: center; height: 9px; flex: none; }
.viewtools .sep { width: 5px; }
.viewtools svg { width: 9px; height: 8px; padding: 0 1px; }
.dim { opacity: .35; }
.viewtools input { width: 19px; height: 8px; background: #2c2c2b; padding: 0 3px; }
.viewtools .combo { width: 64px; height: 8px; margin-left: 2px; }
.scene { width: 100%; flex: 1 1 0; min-height: 0; }
.hud { font-size: 5px; font-weight: 700; fill: #eee; }
.fps { font-size: 5px; }

.channel { width: 122px; display: flex; flex-direction: column; padding: 2px 2px 2px 1px; }
.chicons { display: flex; justify-content: flex-end; gap: 2px; padding-right: 1px; }
.chmenu { display: flex; gap: 7px; height: 11px; padding: 2px 0 0 3px; color: #ddd; }
.chbox { flex: 1; background: #2b2b2a; border: 1px solid #383837; }
.layers { margin-top: 6px; border: 1px solid #505050; background: #444; padding: 0 2px 1px; }
.ltabs, .lmenu { display: flex; gap: 11px; height: 9px; padding-left: 2px; }
.ltabs { color: #777; background: #393938; margin: 0 -2px; padding-left: 4px; }
.ltabs .on { color: #eee; }
.lmenu { gap: 7px; }
.licons { display: flex; justify-content: flex-end; gap: 5px; height: 12px; padding: 2px 2px 0 0; }
.licons svg { width: 7px; height: 7px; }
.ltable { width: 100%; height: 54px; padding-top: 1px; display: block; border-collapse: collapse; background: #2b2b2a; color: #e6e6e6; font-weight: 600; }
.ltable td { width: 11px; height: 9px; padding: 0; text-align: center; line-height: 8px; }
.ltable .nm { width: auto; white-space: nowrap; display: flex; align-items: center; gap: 1px; padding-left: 1px; }
.nm svg { width: 8px; height: 8px; }
.hbar { display: flex; align-items: center; gap: 2px; height: 7px; background: #333; font-size: 4px; }
.hbar i { width: 72px; height: 5px; background: #5c5c5b; margin-right: auto; }

.time { display: flex; align-items: center; height: 31px; padding: 1px 5px 0 6px; }
.track { flex: 1; display: flex; overflow: hidden; height: 28px; padding-left: 15px; background: #2b2b2a; color: #8a8a88; }
.track span { flex: 0 0 3.02%; padding-left: 2px; line-height: 7px; background: linear-gradient(#777, #777) no-repeat 0 100% / 1px 21px; position: relative; }
.track .now { color: #bbb; }
.track .now::before { content: ""; position: absolute; left: 0; top: 0; width: 10px; height: 28px; background: #8888; }
.track b { position: absolute; left: 2px; bottom: 0; color: #fff; }
.cur { width: 41px; height: 8px; margin: 0 4px 0 4px; padding-left: 2px; background: #2b2b2a; }
.play { display: flex; gap: 3px; }
.play svg { width: 8px; height: 8px; fill: #ddd; }

.range { display: flex; align-items: center; height: 20px; gap: 4px; padding: 0 2px 0 7px; border-top: 1px solid #383838; }
.range .f { width: 41px; height: 11px; padding-left: 3px; background: #2b2b2a; color: #ddd; }
.slider { flex: 1; height: 11px; margin-left: 2px; background: #353534; }
.thumb { width: 133px; height: 9px; margin-top: 1px; padding: 0 2px; display: flex; align-items: center; gap: 2px; background: #636362; }
.thumb i { width: 7px; height: 7px; background: #999; }
.thumb .end { margin-left: auto; }
.rright { display: flex; align-items: center; margin-left: -3px; }
.rright svg { width: 11px; height: 11px; margin: 0 1px; }
.flat.cs { width: 52px; }
.fpsel { width: 45px; height: 9px; margin: 0 4px 0 2px; }
.red { background: #b83a3a; }

.cmd { display: flex; align-items: center; height: 16px; padding: 0 4px 0 11px; gap: 3px; border-top: 1px solid #383838; color: #ddd; }
.cmd label { width: 14px; }
.cmd input { flex: 4; height: 11px; background: #2b2b2a; }
.cmd input.out { flex: 7; }
.cmd button { background: #999; }
.help { height: 10px; padding: 1px 10px; color: #aaa; border-top: 1px solid #383838; font-size: 4px; }

.taskbar { display: flex; height: 19px; background: #101214; color: #eee; }
.start { width: 22px; display: grid; place-items: center; }
.search { width: 162px; display: flex; align-items: center; padding: 0 4px; gap: 3px; background: #f3f3f3; color: #333; }
.search svg { width: 12px; height: 12px; }
.search input { flex: 1; font-size: 6px; }
.search ::placeholder { color: #444; opacity: 1; }
.apps { display: flex; }
.apps button { width: 21px; margin-right: 2px; display: grid; place-items: center; border-bottom: 1px solid transparent; }
.apps svg { width: 12px; height: 12px; }
.apps .open { border-color: #7fb89a; }
.apps .act { background: #3a4443; }
.tray { margin-left: auto; display: flex; align-items: center; gap: 6px; padding-right: 10px; }
.tray svg { width: 9px; height: 9px; }
.tray svg:first-child { margin-right: 5px; }
.tray .lang { margin: 0 1px; }
.tray time { width: 22px; text-align: center; line-height: 8px; margin-right: 2px; }

.dialog { position: absolute; left: 56px; top: 130px; width: 225px; height: 170px; display: flex; flex-direction: column; background: #444; border: 2px solid #3d4c46; border-top: 0; color: #ccc; }
.dialog header { display: flex; align-items: center; height: 14px; flex: none; margin: 0 -2px; padding: 0 6px 0 4px; background: #fff; color: #333; }
.dialog h2 { flex: 1; margin: 0 0 0 2px; font-size: 5px; font-weight: 400; color: #222; }
.dialog header button { width: 10px; margin-left: 11px; }
.dialog header button svg { width: 9px; height: 9px; }
.dmenu { display: flex; gap: 7px; padding: 2px 0 0 4px; }
.dtools { display: flex; align-items: center; height: 13px; }
.dtools svg { width: 11px; height: 11px; padding: 1px; margin-right: 1px; }
.dtools svg:nth-child(7) { margin-right: 4px; }
.fold { display: flex; gap: 7px; height: 9px; padding-left: 3px; margin: 1px 0 1px; background: #525251; align-items: center; }
.form { display: grid; grid-template-columns: 45px 1fr 42px; grid-auto-rows: 9px; column-gap: 3px; white-space: nowrap; padding-right: 2px; align-items: center; margin-bottom: 5px; }
.form input:not([type]) { background: #2b2b2a; height: 8px; color: #ddd; padding: 0 1px; }
.form #rn { background: #3b3b3a; color: #6a6a69; }
.form button { background: #5d5d5c; height: 9px; color: #eee; }
.ro { display: flex; gap: 3px; align-items: center; color: #686867; }
.ro input, .row input { appearance: none; width: 6px; height: 6px; background: #2b2b2a; }
.find { display: flex; align-items: center; gap: 3px; padding: 3px 2px 3px; }
.find svg { width: 8px; height: 8px; margin-left: 2px; }
.find .combo { flex: 1; height: 9px; background-color: #2b2b2a; color: #888; }
.list { flex: 1; display: grid; grid-template: 10px 1fr 5px / 1fr 6px; background: #333332; }
.row { display: flex; align-items: center; background: #5285a6; color: #fff; padding-left: 13px; gap: 28px; }
.row input { background: #222 linear-gradient(135deg, transparent 45%, #fff 45%, #fff 60%, transparent 60%); border: 1px solid #2c3a44; }
.lscroll { font-size: 4px; text-align: center; }
.lbar { grid-row: 3; display: flex; align-items: center; font-size: 4px; gap: 1px; }
.lbar i { width: 181px; height: 5px; background: #52645c; }

.menu { position: absolute; margin: 0; list-style: none; background: #505050; border: 1px solid #333; color: #e2e2e2; padding: 0; border-left: 9px solid #373737; white-space: nowrap; box-shadow: 1px 1px 2px #2228; }
.menu li { display: flex; justify-content: space-between; align-items: center; height: 9px; padding: 0 3px; }
.menu b { font-size: 4px; }
.menu .sel { background: #5285a6; }
.menu .off { color: #717171; }
.menu .line { height: 3px; background: linear-gradient(#3e3e3e, #3e3e3e) no-repeat 0 center / 100% 1px; }
.m1 { left: 197px; top: 237px; width: 71px; }
.m1 li { height: 11px; }
.m1 li + li { border-top: 1px solid #444; height: 12px; }
.m2 { left: 268px; top: 250px; width: 108px; padding: 8px 0 1px; }
.m3 { left: 376px; top: 319px; width: 180px; padding: 1px 0 2px; }
.pointer { position: absolute; left: 359px; top: 313px; width: 9px; height: 9px; }

.mark { position: absolute; inset: auto 0 15px; text-align: center; color: #2b2b2b; pointer-events: none; }
.mark p { margin: 0; text-shadow: 2px 0 #a9a9a7, -2px 0 #a9a9a7, 0 2px #a9a9a7, 0 -2px #a9a9a7, 1px 1px #a9a9a7, -1px 1px #a9a9a7, 1px -1px #a9a9a7, -1px -1px #a9a9a7, 2px 1px #a9a9a7, -2px 1px #a9a9a7, 2px -1px #a9a9a7, -2px -1px #a9a9a7, 1px 2px #a9a9a7, -1px 2px #a9a9a7, 1px -2px #a9a9a7, -1px -2px #a9a9a7; }
.cn { font: 700 24px/34px "Noto Sans CJK SC", sans-serif; }
.url { font: 700 22px/34px "Noto Sans", sans-serif; }
```
